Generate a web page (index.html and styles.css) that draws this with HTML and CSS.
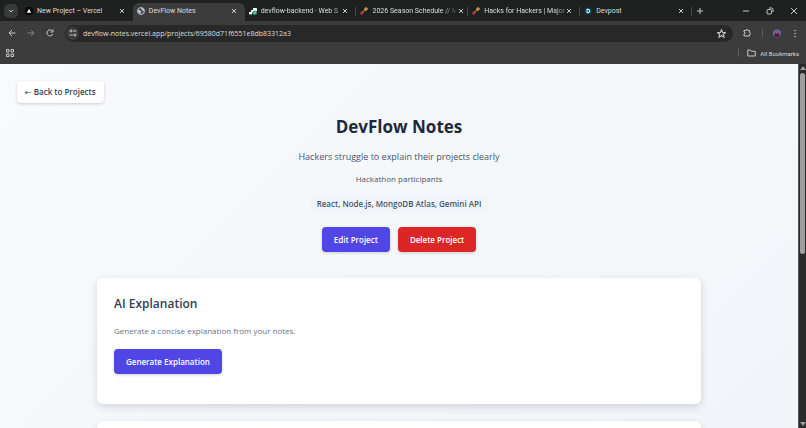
FILE: index.html
```html
<!doctype html>
<html lang="en">
<head>
  <meta charset="utf-8">
  <title>DevFlow Notes</title>
  <link rel="stylesheet" href="styles.css">
</head>
<body>
  <header class="browser">
    <div class="tabstrip">
      <button class="tab-search" aria-label="Search tabs">
        <svg width="8" height="8" viewBox="0 0 8 8"><path d="M2 3l2 2 2-2" /></svg>
      </button>
      <div class="tabs">
        <div class="tab">
          <svg class="favicon" viewBox="0 0 16 16"><circle cx="8" cy="8" r="8" fill="#000" /><path d="M8 4l4.500 7.500h-9z" fill="#fff" /></svg>
          <span class="tab-title">New Project – Vercel</span>
          <button class="close" aria-label="Close tab"><svg width="6" height="6" viewBox="0 0 6 6"><path d="M1 1l4 4M5 1L1 5" /></svg></button>
        </div>
        <div class="tab active">
          <svg class="favicon" viewBox="0 0 16 16"><circle cx="8" cy="8" r="7" fill="#4a4d51" stroke="#c3c7cc" stroke-width="1.800" /><path d="M2 5c3 0 3 2 5 3s1 3 0 5c-3 0-5-3-5-5zM8 2c0 3 2 2 2 4s3 1 4 3V6l-3-4z" fill="#c3c7cc" /></svg>
          <span class="tab-title">DevFlow Notes</span>
          <button class="close" aria-label="Close tab"><svg width="6" height="6" viewBox="0 0 6 6"><path d="M1 1l4 4M5 1L1 5" /></svg></button>
        </div>
        <div class="tab">
          <svg class="favicon" viewBox="0 0 16 16"><path d="M8 2h6a2 2 0 012 2v4H9v3H6v4H2a2 2 0 01-2-2v-3h4V6h4z" fill="#fff" /><circle cx="11.500" cy="11.500" r="4.500" fill="#1fa67a" /><path d="M9.500 11.500l1.500 1.500 3-3" fill="none" stroke="#fff" stroke-width="1.300" /></svg>
          <span class="tab-title fade">devflow-backend · Web S</span>
          <button class="close" aria-label="Close tab"><svg width="6" height="6" viewBox="0 0 6 6"><path d="M1 1l4 4M5 1L1 5" /></svg></button>
        </div>
        <div class="tab">
          <svg class="favicon" viewBox="0 0 16 16"><path d="M2 13l9-8" stroke="#d8434a" stroke-width="3" /><path d="M0 9l7 6-5 1z" fill="#c9313d" /><path d="M12 0l1 3 3 1-3 1-1 3-1-3-3-1 3-1z" fill="#f2b632" stroke="#f2b632" /><circle cx="6" cy="10" r="1.500" fill="#5b7fd0" /></svg>
          <span class="tab-title fade">2026 Season Schedule // M</span>
          <button class="close" aria-label="Close tab"><svg width="6" height="6" viewBox="0 0 6 6"><path d="M1 1l4 4M5 1L1 5" /></svg></button>
        </div>
        <div class="tab">
          <svg class="favicon" viewBox="0 0 16 16"><path d="M2 13l9-8" stroke="#d8434a" stroke-width="3" /><path d="M0 9l7 6-5 1z" fill="#c9313d" /><path d="M12 0l1 3 3 1-3 1-1 3-1-3-3-1 3-1z" fill="#f2b632" stroke="#f2b632" /><circle cx="6" cy="10" r="1.500" fill="#5b7fd0" /></svg>
          <span class="tab-title fade">Hacks for Hackers | Major</span>
          <button class="close" aria-label="Close tab"><svg width="6" height="6" viewBox="0 0 6 6"><path d="M1 1l4 4M5 1L1 5" /></svg></button>
        </div>
        <div class="tab">
          <svg class="favicon" viewBox="0 0 16 16"><path d="M4 1h8l4 7-4 7H4L0 8z" fill="#00445e" /><path d="M6 4.500h2a3.500 3.500 0 010 7H6z" fill="none" stroke="#fff" stroke-width="2" /></svg>
          <span class="tab-title">Devpost</span>
          <button class="close" aria-label="Close tab"><svg width="6" height="6" viewBox="0 0 6 6"><path d="M1 1l4 4M5 1L1 5" /></svg></button>
        </div>
      </div>
      <button class="new-tab" aria-label="New tab"><svg width="8" height="8" viewBox="0 0 8 8"><path d="M4 1v6M1 4h6" /></svg></button>
      <div class="window-controls">
        <button aria-label="Minimize"><svg width="8" height="8" viewBox="0 0 8 8"><path d="M1 4h6" /></svg></button>
        <button aria-label="Restore"><svg width="8" height="8" viewBox="0 0 8 8"><rect x="1" y="2.500" width="4.500" height="4.500" rx="1" /><path d="M3 1h2.500q1.500 0 1.500 1.500V5" /></svg></button>
        <button aria-label="Close"><svg width="8" height="8" viewBox="0 0 8 8"><path d="M1 1l6 6M7 1L1 7" /></svg></button>
      </div>
    </div>

    <div class="toolbar">
      <button aria-label="Back"><svg width="8" height="8" viewBox="0 0 16 16"><path d="M15 8H2M8 2L2 8l6 6" /></svg></button>
      <button class="dim" aria-label="Forward"><svg width="8" height="8" viewBox="0 0 16 16"><path d="M1 8h13M8 2l6 6-6 6" /></svg></button>
      <button aria-label="Reload"><svg width="8" height="8" viewBox="0 0 16 16"><path d="M13.500 10A6 6 0 1113 4.500M14 1v5H9" /></svg></button>
      <div class="address">
        <button class="site-info" aria-label="Site information"><svg width="8" height="8" viewBox="0 0 16 16"><circle cx="4" cy="4" r="2" /><path d="M8 4h7M1 12h7" /><circle cx="12" cy="12" r="2" /></svg></button>
        <input class="url" type="text" aria-label="Address" value="devflow-notes.vercel.app/projects/69580d71f6551e8db83312a3">
        <button class="star" aria-label="Bookmark this tab"><svg width="9" height="9" viewBox="0 0 16 16"><path d="M8 1.500l2 4.500 5 .5-3.800 3.200 1.200 4.800L8 12l-4.400 2.500 1.200-4.800L1 6.500 6 6z" /></svg></button>
      </div>
      <button aria-label="Extensions"><svg width="10" height="10" viewBox="0 0 16 16"><path d="M2 3h4a2 2 0 014 0h3v4a2 2 0 010 4v3H2v-4a2 2 0 000-4z" /></svg></button>
      <span class="divider"></span>
      <button aria-label="Profile"><svg width="11" height="11" viewBox="0 0 22 22"><circle cx="11" cy="11" r="11" fill="#6b63b5" stroke="none" /><path d="M3 18C3 12 7 13 7 9s7-5 8 0 4 3 4 9a11 11 0 01-16 0z" fill="#4b2335" stroke="none" /><circle cx="11" cy="8" r="3" fill="#b0616b" stroke="none" /></svg></button>
      <button class="menu" aria-label="Menu"><svg width="2" height="9" viewBox="0 0 4 18"><circle cx="2" cy="3" r="1.500" /><circle cx="2" cy="9" r="1.500" /><circle cx="2" cy="15" r="1.500" /></svg></button>
    </div>

    <div class="bookmarks">
      <button aria-label="Tab groups"><svg width="8" height="8" viewBox="0 0 16 16"><path d="M1 1h5v5H1zM10 1h5v5h-5zM1 10h5v5H1zM10 10h5v5h-5z" /></svg></button>
      <span class="divider"></span>
      <button class="all-bookmarks"><svg width="9" height="8" viewBox="0 0 18 16"><path d="M1.500 2h5l2 2.500h8V14h-15z" /></svg>All Bookmarks</button>
    </div>
  </header>

  <div class="viewport">
    <main class="page">
      <a class="back" href="#"><span class="arrow">←</span> Back to Projects</a>

      <section class="project">
        <h1>DevFlow Notes</h1>
        <p class="problem">Hackers struggle to explain their projects clearly</p>
        <p class="audience">Hackathon participants</p>
        <p class="stack">React, Node.js, MongoDB Atlas, Gemini API</p>
        <div class="actions">
          <button class="btn">Edit Project</button>
          <button class="btn danger">Delete Project</button>
        </div>
      </section>

      <section class="card">
        <h2>AI Explanation</h2>
        <p>Generate a concise explanation from your notes.</p>
        <button class="btn">Generate Explanation</button>
      </section>
      <section class="card"></section>
    </main>

    <div class="scrollbar">
      <svg width="6" height="6" viewBox="0 0 6 6"><path d="M3 1l3 4H0z" /></svg>
      <span class="thumb"></span>
      <svg width="6" height="6" viewBox="0 0 6 6"><path d="M3 5l3-4H0z" /></svg>
    </div>
  </div>
</body>
</html>
```

FILE: styles.css
```css
* {
  box-sizing: border-box;
}

body {
  margin: 0;
  height: 100vh;
  overflow: hidden;
  display: flex;
  flex-direction: column;
  font-family: "Open Sans", "Noto Sans", sans-serif;
  font-size: 8px;
}

button, input {
  font: inherit;
  color: inherit;
  border: 0;
  padding: 0;
  background: none;
}

h1, h2, p {
  margin: 0;
}

/* browser window */
.browser {
  flex: none;
  background: #3c3c3c;
  color: #dedede;
  font-family: Roboto, sans-serif;
  font-size: 7px;
}

.browser button {
  display: flex;
  align-items: center;
  justify-content: center;
  flex: none;
}

.browser button svg {
  fill: none;
  stroke: #c8c8c8;
  stroke-width: 1;
}

.browser .toolbar button svg,
.browser .bookmarks button svg {
  stroke-width: 2;
}

.tabstrip {
  display: flex;
  align-items: center;
  height: 21px;
  padding-left: 4px;
  background: #1f2120;
}

.tab-search {
  width: 14px;
  height: 14px;
  border-radius: 5px;
  background: #383a39;
}

.tabs {
  display: flex;
  align-items: flex-end;
  flex: 1;
  max-width: 671px;
  height: 21px;
  margin-left: 3px;
}

.tab {
  display: flex;
  align-items: center;
  flex: 1;
  min-width: 0;
  height: 18px;
  padding: 0 8px 2px 4px;
}

.tab:nth-child(n+3) {
  background: linear-gradient(#4a4a4a, #4a4a4a) right 4px / 1px 9px no-repeat;
}

.tab.active {
  background: #3c3c3c;
  border-radius: 6px 6px 0 0;
}

.favicon {
  width: 8px;
  height: 8px;
  flex: none;
  margin-right: 4px;
}

.tab-title {
  flex: 1;
  white-space: nowrap;
}

.tab-title.fade {
  -webkit-mask-image: linear-gradient(to right, #000 70px, transparent 86px);
  mask-image: linear-gradient(to right, #000 70px, transparent 86px);
}

.close {
  width: 6px;
}

.new-tab {
  width: 16px;
}

.window-controls {
  display: flex;
  margin-left: auto;
}

.window-controls button {
  width: 24px;
}

.toolbar {
  display: flex;
  align-items: center;
  height: 24px;
  padding: 0 7px 0 8px;
}

.toolbar > button {
  width: 8px;
  margin-right: 11px;
}

.toolbar .dim {
  opacity: 0.5;
}

.address {
  display: flex;
  align-items: center;
  flex: 1;
  height: 17px;
  margin-right: 10px;
  padding: 0 7px 0 1px;
  border-radius: 9px;
  background: #282828;
  font-family: "Open Sans", sans-serif;
}

.site-info {
  width: 13px;
  height: 13px;
  border-radius: 50%;
  background: #3c3c3c;
}

.url {
  flex: 1;
  min-width: 0;
  margin-left: 4px;
}

.divider {
  width: 1px;
  height: 8px;
  background: #606060;
}

.toolbar .divider {
  margin-right: 10px;
}

.toolbar .menu {
  width: 2px;
  margin: 0 3px 0 2px;
}

.browser .toolbar .menu svg {
  fill: #c8c8c8;
  stroke: none;
}

.bookmarks {
  display: flex;
  align-items: center;
  height: 19px;
  padding: 0 7px 3px 6px;
  font-size: 6px;
}

.bookmarks .divider {
  margin: 0 8px 0 auto;
}

.all-bookmarks {
  gap: 4px;
}

/* page */
.viewport {
  flex: 1;
  min-height: 0;
  display: flex;
}

.page {
  flex: 1;
  overflow: hidden;
  padding: 17px;
  background: linear-gradient(135deg, #f8fafc, #f1f5f9);
  color: #475569;
}

.back {
  display: inline-block;
  padding: 5px 8px;
  border-radius: 4px;
  background: #fff;
  box-shadow: 0 1px 3px rgba(15, 23, 42, 0.2);
  color: #334155;
  font-weight: 600;
  line-height: 11px;
  text-decoration: none;
}

.arrow {
  font-family: "DejaVu Sans", sans-serif;
  font-weight: 400;
}

.project {
  display: flex;
  flex-direction: column;
  align-items: center;
  margin-top: 10px;
  text-align: center;
}

h1 {
  color: #1e293b;
  font-size: 17px;
  line-height: 28px;
}

.problem {
  margin-top: 9px;
  font-size: 9px;
  line-height: 14px;
}

.audience {
  margin-top: 9px;
  line-height: 12px;
}

.stack {
  margin-top: 9px;
  padding: 4px 8px;
  border-radius: 10px;
  background: #f1f5f9;
  font-weight: 600;
  line-height: 12px;
}

.actions {
  display: flex;
  gap: 8px;
  margin-top: 13px;
}

.btn {
  padding: 7px 12px;
  border-radius: 4px;
  background: #4f46e5;
  box-shadow: 0 1px 3px rgba(15, 23, 42, 0.2);
  color: #fff;
  font-weight: 600;
  line-height: 11px;
}

.btn.danger {
  background: #dc2626;
}

.card {
  max-width: 604px;
  min-height: 126px;
  margin: 26px auto 0;
  padding: 17px;
  border-radius: 6px;
  background: #fff;
  box-shadow: 0 3px 8px rgba(15, 23, 42, 0.15);
}

.card + .card {
  margin-top: 17px;
}

.card h2 {
  color: #334155;
  font-size: 12px;
  font-weight: 600;
  line-height: 18px;
}

.card p {
  margin: 12px 0;
  color: #64748b;
  line-height: 12px;
}

.scrollbar {
  display: flex;
  flex-direction: column;
  align-items: center;
  width: 8px;
  padding: 1px 0;
  border-left: 1px solid #555;
  background: #2b2b2b;
}

.scrollbar svg {
  fill: #9e9e9e;
}

.thumb {
  width: 5px;
  height: 50%;
  margin: 2px 0 auto;
  border-radius: 3px;
  background: #9e9e9e;
}
```
